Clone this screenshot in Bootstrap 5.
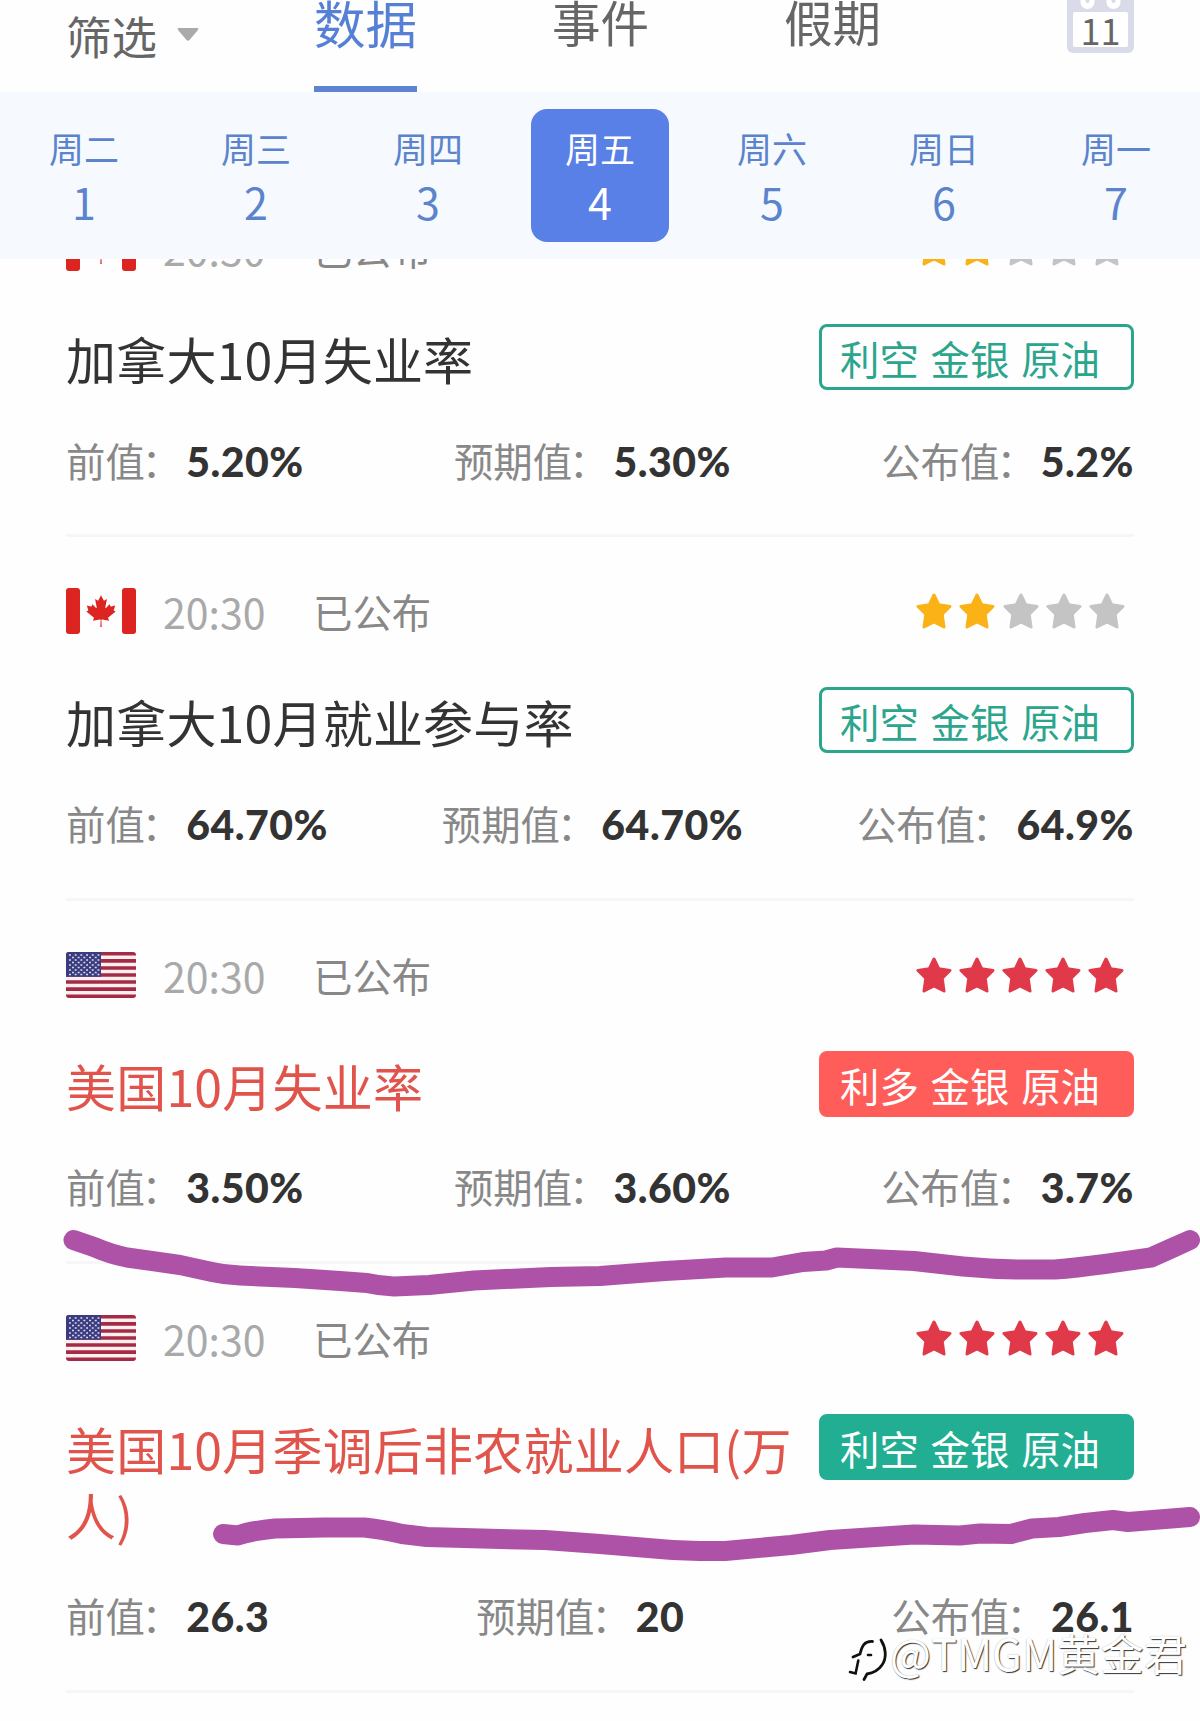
<!DOCTYPE html>
<html lang="zh-CN">
<head>
<meta charset="UTF-8">
<meta name="viewport" content="width=device-width, initial-scale=1.0">
<title>财经日历</title>
<link href="https://cdn.jsdelivr.net/npm/bootstrap@5.3.0/dist/css/bootstrap.min.css" rel="stylesheet">
<style>
body {
    font-family: "Noto Sans CJK SC", sans-serif;
    color: #333;
    background-color: #fefefe;
}
.screen {
    width: 1200px;
    height: 1721px;
}
/* Barra superior */
.top-bar {
    height: 92px;
    padding: 0 66px;
    color: #666;
}
.filter-btn {
    width: 248px;
    font-size: 45.5px;
    line-height: 71px;
    gap: 20px;
}
.tab-list {
    gap: 135px;
    font-size: 48.5px;
    line-height: 43px;
}
.tab-item.active {
    font-size: 51.5px;
    line-height: 43px;
    color: #5580d6;
    border-bottom: 6px solid #5f83d3;
}
/* Días de la semana */
.day-bar {
    height: 167px;
    margin: 0 -2px;
    padding-top: 17px;
    background-color: #f6faff;
    color: #5c84cc;
}
.day-box {
    width: 138px;
    height: 133px;
    padding-top: 19px;
    border-radius: 16px;
}
.day-box.active {
    background-color: #5880e6;
    color: #fff;
}
.day-name {
    font-size: 35px;
    line-height: 40px;
}
.day-num {
    font-size: 43px;
    line-height: 50px;
    margin-top: 8px;
}
/* Lista de datos */
.event-list {
    height: 1462px;
    padding: 0 66px;
}
.event-item {
    padding: 51px 0 44.8px;
    border-bottom: 3px solid #f6f6f7;
}
.event-item:first-child {
    margin-top: -85px;
}
.event-meta {
    height: 46px;
    line-height: 46px;
}
.event-time {
    width: 150px;
    margin-left: 27px;
    font-size: 41px;
    color: #a9a9a9;
}
.event-state {
    font-size: 39.4px;
    color: #888;
}
.star-list {
    width: 209.5px;
    gap: 7px;
    margin-right: 9px;
}
.star-on + .star-off {
    margin-left: 1.5px;
}
.event-head {
    height: 66px;
    margin-top: 53px;
}
.event-head.two-lines {
    height: 132px;
}
.event-title {
    width: 745px;
    padding-top: 1px;
    font-size: 50px;
    line-height: 66px;
    letter-spacing: .2px;
}
.event-title.hot {
    color: #e0544b;
}
.effect-tag {
    width: 315px;
    height: 66px;
    padding-left: 18px;
    border: 3px solid;
    border-radius: 8px;
    font-size: 39.4px;
    line-height: 61px;
    word-spacing: 3px;
}
.tag-line {
    color: #2ba58c;
}
.tag-green {
    color: #fff;
    background-color: #22ae92;
    border-color: #22ae92;
}
.tag-red {
    color: #fff;
    background-color: #ff5d59;
    border-color: #ff5d59;
}
.event-values {
    height: 60px;
    margin-top: 39.5px;
    font-size: 39.4px;
    line-height: 60px;
    color: #888;
}
.event-values i {
    font-style: normal;
    margin-left: -3px;
    margin-right: 3px;
}
.event-values b {
    font-family: Lato, sans-serif;
    font-weight: 900;
    font-size: 41px;
    color: #333;
    margin-left: 2px;
    letter-spacing: .5px;
}
/* Trazos y marca de agua sobre la lista */
.pen-layer {
    top: 0;
    left: 0;
    pointer-events: none;
}
.watermark {
    top: 1622px;
    left: 848px;
    font-size: 43.3px;
    line-height: 60px;
    color: #fff;
    text-shadow: 1px 1px 1px #333, 0 0 1px #aaa;
}
</style>
</head>
<body>
<!-- Iconos -->
<svg class="d-none">
    <symbol id="star" viewBox="0 0 36 36">
        <path d="M18 2 L22.8 11.8 L34 13.4 L26.2 21.2 L28 34 L18 29 L8 34 L9.8 21.2 L2 13.4 L13.2 11.8 Z" fill="currentColor" stroke="currentColor" stroke-width="3" stroke-linejoin="round"/>
    </symbol>
    <symbol id="flag-ca" viewBox="0 0 70 46">
        <rect width="14" height="46" rx="3" fill="#dc2521"/>
        <rect x="56" width="14" height="46" rx="3" fill="#dc2521"/>
        <path fill="#dc2521" transform="translate(35 23) scale(.0079)" d="m-90 2030 45-863a95 95 0 0 0-111-98l-859 151 116-320a65 65 0 0 0-20-73l-941-762 212-99a65 65 0 0 0 34-79l-186-572 542 115a65 65 0 0 0 73-38l105-247 423 454a65 65 0 0 0 111-57l-204-1052 327 189a65 65 0 0 0 91-27l332-652 332 652a65 65 0 0 0 91 27l327-189-204 1052a65 65 0 0 0 111 57l423-454 105 247a65 65 0 0 0 73 38l542-115-186 572a65 65 0 0 0 34 79l212 99-941 762a65 65 0 0 0-20 73l116 320-859-151a95 95 0 0 0-111 98l45 863z"/>
    </symbol>
    <symbol id="flag-us" viewBox="0 0 70 46">
        <rect width="70" height="46" rx="3" fill="#a32b45"/>
        <path d="M0 5.3H70M0 12.4H70M0 19.5H70M0 26.5H70M0 33.6H70M0 40.7H70" stroke="#fdeef0" stroke-width="3.5"/>
        <path d="M3 0H35V24.8H0V3Q0 0 3 0Z" fill="#3b3c80"/>
        <path d="M3 3H34M3 8H34M3 13H34M3 18H34M3 22.5H34" stroke="#dcdcf0" stroke-width="1.7" stroke-dasharray="1.9 3.8"/>
        <path d="M6 5.5H34M6 10.5H34M6 15.5H34M6 20.5H34" stroke="#dcdcf0" stroke-width="1.7" stroke-dasharray="1.9 3.8"/>
    </symbol>
</svg>

<div class="screen position-relative overflow-hidden">
<header class="top-bar d-flex">
    <div class="filter-btn d-flex">
        <span>筛选</span>
        <svg width="22" height="69" viewBox="0 0 22 69"><path d="M1.500 28H20.500Q22 28.500 21 30L12.500 40Q11 41.500 9.500 40L1 30Q0 28.500 1.500 28Z" fill="#aaa"/></svg>
    </div>
    <nav class="tab-list d-flex">
        <div class="tab-item active">数据</div>
        <div class="tab-item">事件</div>
        <div class="tab-item">假期</div>
    </nav>
    <svg class="ms-auto" width="67" height="54" viewBox="0 0 67 54">
        <rect y="-8" width="67" height="61" rx="6" fill="#d9dce8"/>
        <rect x="6" y="12" width="55" height="35" rx="2" fill="#fff"/>
        <path d="M20.500 -4V2M46.500 -4V2" stroke="#fff" stroke-width="14" stroke-linecap="round"/>
        <path d="M20.500 -4V1M46.500 -4V1" stroke="#d9dce8" stroke-width="4" stroke-linecap="round"/>
        <text x="33.500" y="45" text-anchor="middle" font-size="36" fill="#666">11</text>
    </svg>
</header>

<div class="day-bar d-flex text-center" id="dayBar"></div>

<main class="event-list overflow-hidden" id="eventList"></main>

<svg class="pen-layer position-absolute" width="1200" height="1721" fill="none" stroke="#ae52a7" stroke-width="20" stroke-linecap="round" stroke-linejoin="round">
    <path d="M73.500 1240L94 1247Q110 1254 127 1257.500L180 1265L212 1272Q225 1275 240 1275.500L295 1278L340 1281L367 1283Q380 1286 394 1286.500L429 1285L474 1280.500L551 1277L600 1276L665 1271L726 1267.500L772 1267.500L803 1262L826 1260.500L837 1257.500L914 1261L963 1266.500Q990 1269 1017 1269.500L1055 1269.500Q1075 1268 1105 1264L1151 1257.500L1170 1249L1190 1240"/>
    <path d="M223 1534L238 1535.500Q250 1531 275 1528.500L325 1527.500L364 1527.500Q380 1529 402 1534L427 1537L500 1539L545 1540L600 1544L660 1549Q690 1551.500 725 1551L791 1545L830 1540L914 1534.500L960 1535.500L980 1533.500L1011 1534L1032 1528.500L1059 1527L1085 1523L1113 1520L1128 1522L1190 1517"/>
</svg>

<div class="watermark position-absolute d-flex">
    <svg width="42" height="64" viewBox="0 -14 42 64" fill="none" stroke="#111" stroke-linecap="round">
        <path d="M24.500 5.500C16 5 14 10 12 18L5 21" stroke-width="2.800"/>
        <path d="M10.300 24.500L7.600 37.500L2 36" stroke-width="2.600"/>
        <path d="M33 4C38 12 39 22 34 29C30 35 25 37 19 38L16 43.500" stroke-width="2.800"/>
        <path d="M20 19H23" stroke-width="2.600"/>
    </svg>
    <span>@TMGM黄金君</span>
</div>
</div>

<script>
const days = [['周二', 1], ['周三', 2], ['周四', 3], ['周五', 4], ['周六', 5], ['周日', 6], ['周一', 7]];

const events = [
    { flag: 'ca', title: '加拿大10月失业率', stars: 2, tag: '利空 金银 原油', tagClass: 'tag-line', values: ['5.20%', '5.30%', '5.2%'] },
    { flag: 'ca', title: '加拿大10月就业参与率', stars: 2, tag: '利空 金银 原油', tagClass: 'tag-line', values: ['64.70%', '64.70%', '64.9%'] },
    { flag: 'us', title: '美国10月失业率', stars: 5, tag: '利多 金银 原油', tagClass: 'tag-red', values: ['3.50%', '3.60%', '3.7%'] },
    { flag: 'us', title: '美国10月季调后非农就业人口(万人)', stars: 5, tag: '利空 金银 原油', tagClass: 'tag-green', values: ['26.3', '20', '26.1'] },
];

// Días
document.getElementById('dayBar').innerHTML = days.map(([name, num]) => `
    <div class="col d-flex justify-content-center">
        <div class="day-box ${num === 4 ? 'active' : ''}">
            <div class="day-name">${name}</div>
            <div class="day-num">${num}</div>
        </div>
    </div>
`).join('');

// Estrellas: rojas cuando son cinco, amarillas en otro caso
function stars(count) {
    const color = count === 5 ? '#e0394a' : '#fbb216';
    let html = '';
    for (let i = 0; i < 5; i++) {
        const on = i < count;
        html += `<svg class="${on ? 'star-on' : 'star-off'}" width="36" height="36" color="${on ? color : '#c4c4c4'}"><use href="#star"/></svg>`;
    }
    return html;
}

// Lista
document.getElementById('eventList').innerHTML = events.map((e) => `
    <section class="event-item">
        <div class="event-meta d-flex align-items-center">
            <svg width="70" height="46"><use href="#flag-${e.flag}"/></svg>
            <span class="event-time">20:30</span>
            <span class="event-state">已公布</span>
            <div class="star-list d-flex ms-auto">${stars(e.stars)}</div>
        </div>
        <div class="event-head d-flex justify-content-between align-items-start ${e.title.length > 15 ? 'two-lines' : ''}">
            <div class="event-title ${e.stars === 5 ? 'hot' : ''}">${e.title}</div>
            <div class="effect-tag flex-shrink-0 ${e.tagClass}">${e.tag}</div>
        </div>
        <div class="event-values d-flex justify-content-between">
            <span>前值<i>：</i><b>${e.values[0]}</b></span>
            <span>预期值<i>：</i><b>${e.values[1]}</b></span>
            <span>公布值<i>：</i><b>${e.values[2]}</b></span>
        </div>
    </section>
`).join('');
</script>

<script src="https://cdn.jsdelivr.net/npm/bootstrap@5.3.0/dist/js/bootstrap.bundle.min.js"></script>
</body>
</html>
